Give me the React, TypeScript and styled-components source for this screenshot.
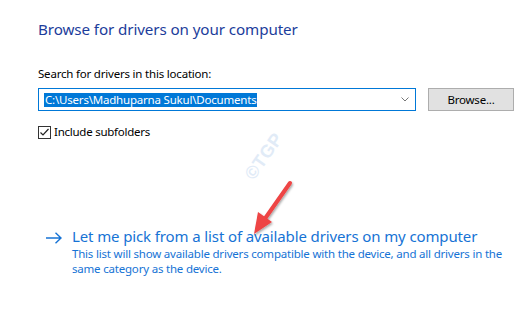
import React from "react";
import styled, { createGlobalStyle } from "styled-components";

const GlobalStyle = createGlobalStyle`
  html, body {
    margin: 0;
    padding: 0;
    background: #fff;
  }
  body {
    font-family: "Segoe UI", "Noto Sans", "Liberation Sans", sans-serif;
    color: #000;
  }
`;

const Page = styled.div`
  position: relative;
  width: 522px;
  height: 312px;
  overflow: hidden;
  background: #fff;
  box-sizing: border-box;
  padding: 19px 8px 0 38px;
`;

const Title = styled.h1`
  margin: 0;
  font-size: 15.2px;
  font-weight: 400;
  line-height: 21px;
  letter-spacing: -0.1px;
  color: #1c3d9b;
`;

const Label = styled.div`
  margin-top: 26px;
  font-size: 11.5px;
  letter-spacing: -0.2px;
  line-height: 16px;
`;

const PathRow = styled.div`
  display: flex;
  align-items: center;
  gap: 12px;
  margin-top: 6px;
`;

const Combo = styled.div`
  display: flex;
  align-items: center;
  width: 378px;
  height: 23px;
  box-sizing: border-box;
  border: 1px solid #0078d7;
  padding: 0 5px;
`;

const Selected = styled.span`
  background: #0078d7;
  color: #fff;
  font-size: 11.5px;
  letter-spacing: -0.2px;
  line-height: 14px;
  padding: 0 1px;
`;

const Chevron = styled.svg`
  margin-left: auto;
  margin-right: 1px;
  width: 8px;
  height: 5px;
`;

const BrowseButton = styled.button`
  width: 86px;
  height: 23px;
  box-sizing: border-box;
  border: 1px solid #adadad;
  background: #e1e1e1;
  font-family: inherit;
  font-size: 11.5px;
  letter-spacing: -0.2px;
  color: #000;
  padding: 0;
`;

const CheckRow = styled.label`
  display: flex;
  align-items: center;
  gap: 3px;
  margin-top: 13px;
  font-size: 11.5px;
  letter-spacing: -0.25px;
  line-height: 16px;
`;

const Box = styled.span`
  display: inline-flex;
  align-items: center;
  justify-content: center;
  width: 13px;
  height: 13px;
  box-sizing: border-box;
  border: 1px solid #333;
  background: #fff;
`;

const Link = styled.div`
  display: flex;
  gap: 10px;
  margin-top: 86px;
  margin-left: 8px;
  color: #1673d5;
`;

const LinkArrow = styled.svg`
  width: 16px;
  height: 12px;
  margin-top: 6px;
  flex-shrink: 0;
`;

const LinkBody = styled.div`
  display: flex;
  flex-direction: column;
`;

const LinkTitle = styled.div`
  font-size: 15px;
  letter-spacing: -0.12px;
  line-height: 20px;
`;

const LinkText = styled.div`
  font-size: 11.5px;
  letter-spacing: -0.2px;
  line-height: 15px;
  width: 442px;
`;

const Watermark = styled.div`
  position: absolute;
  left: 238px;
  top: 146px;
  transform: rotate(-55deg);
  font-family: "Liberation Sans", sans-serif;
  font-weight: 700;
  font-size: 18px;
  color: #e1ebf7;
  letter-spacing: 0.5px;
`;

const Annotation = styled.svg`
  position: absolute;
  left: 244px;
  top: 176px;
  width: 56px;
  height: 66px;
`;

export default function App() {
  return (
    <>
      <GlobalStyle />
      <Page>
        <Title>Browse for drivers on your computer</Title>
        <Label>Search for drivers in this location:</Label>
        <PathRow>
          <Combo>
            <Selected>C:\Users\Madhuparna Sukul\Documents</Selected>
            <Chevron viewBox="0 0 8 5">
              <path d="M0.5 0.5 L4 4 L7.5 0.5" fill="none" stroke="#777" strokeWidth="1" />
            </Chevron>
          </Combo>
          <BrowseButton>Browse...</BrowseButton>
        </PathRow>
        <CheckRow>
          <Box>
            <svg width="11" height="11" viewBox="0 0 11 11">
              <path d="M1.5 5.5 L4 8 L9.5 2" fill="none" stroke="#222" strokeWidth="1.2" />
            </svg>
          </Box>
          Include subfolders
        </CheckRow>
        <Link>
          <LinkArrow viewBox="0 0 16 12">
            <path d="M0 6 H15 M9.5 0.7 L15 6 L9.5 11.3" fill="none" stroke="#1673d5" strokeWidth="1.4" />
          </LinkArrow>
          <LinkBody>
            <LinkTitle>Let me pick from a list of available drivers on my computer</LinkTitle>
            <LinkText>
              This list will show available drivers compatible with the device, and all drivers in the
              same category as the device.
            </LinkText>
          </LinkBody>
        </Link>
        <Watermark>©TGP</Watermark>
        <Annotation viewBox="0 0 56 66">
          <defs>
            <filter id="sh" x="-30%" y="-30%" width="160%" height="160%">
              <feDropShadow dx="1" dy="1.5" stdDeviation="1.2" floodColor="#000" floodOpacity="0.35" />
            </filter>
          </defs>
          <g filter="url(#sh)">
            <path d="M46 7 L20 44" stroke="#ee4444" strokeWidth="4" strokeLinecap="round" fill="none" />
            <path d="M10 58 L14 36 L28 46 Z" fill="#ee4444" />
          </g>
        </Annotation>
      </Page>
    </>
  );
}
